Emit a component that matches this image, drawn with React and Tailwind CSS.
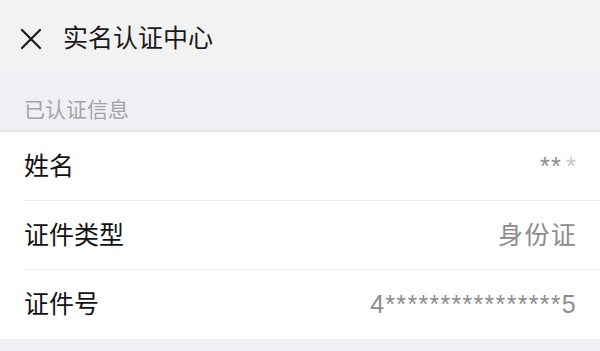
const rows = [
  { label: "姓名", value: "**", faded: "*" },
  { label: "证件类型", value: "身份证" },
  { label: "证件号", value: "4****************5" },
]

function CloseIcon() {
  return (
    <svg width="22" height="22" viewBox="0 0 22 22" fill="none" stroke="#1a1a1a" strokeWidth="2.2" strokeLinecap="round">
      <path d="M2 2L20 20M20 2L2 20" />
    </svg>
  )
}

export default function App() {
  return (
    <div className="flex h-[351px] w-[600px] flex-col bg-[#efeff4] font-['Liberation_Sans','Noto_Sans_CJK_SC',sans-serif]">
      <header className="flex h-[77px] shrink-0 items-center gap-[21px] bg-[#f2f2f2] pl-[20px]">
        <CloseIcon />
        <h1 className="text-[25px] leading-none text-[#1a1a1a]">实名认证中心</h1>
      </header>

      <div className="flex h-[55px] shrink-0 items-center border-b-2 border-[#e4e4e8] pl-[24px] pt-[11px] text-[21px] leading-none text-[#a3a3a6]">
        已认证信息
      </div>

      <div className="bg-white">
        {rows.map((row, index) => (
          <div key={row.label} className="pl-[24px]">
            <div
              className={`flex h-[69px] items-center justify-between pr-[23px] ${index < rows.length - 1 ? "border-b border-[#ececec]" : ""}`}
            >
              <span className="text-[25px] leading-none text-[#111]">{row.label}</span>
              <span className="text-[25px] leading-none tracking-[1.3px] text-[#8c8c8c]">
                {row.value}
                {row.faded && <span className="ml-[4px] text-[#c8c8c8]">{row.faded}</span>}
              </span>
            </div>
          </div>
        ))}
      </div>
    </div>
  )
}
